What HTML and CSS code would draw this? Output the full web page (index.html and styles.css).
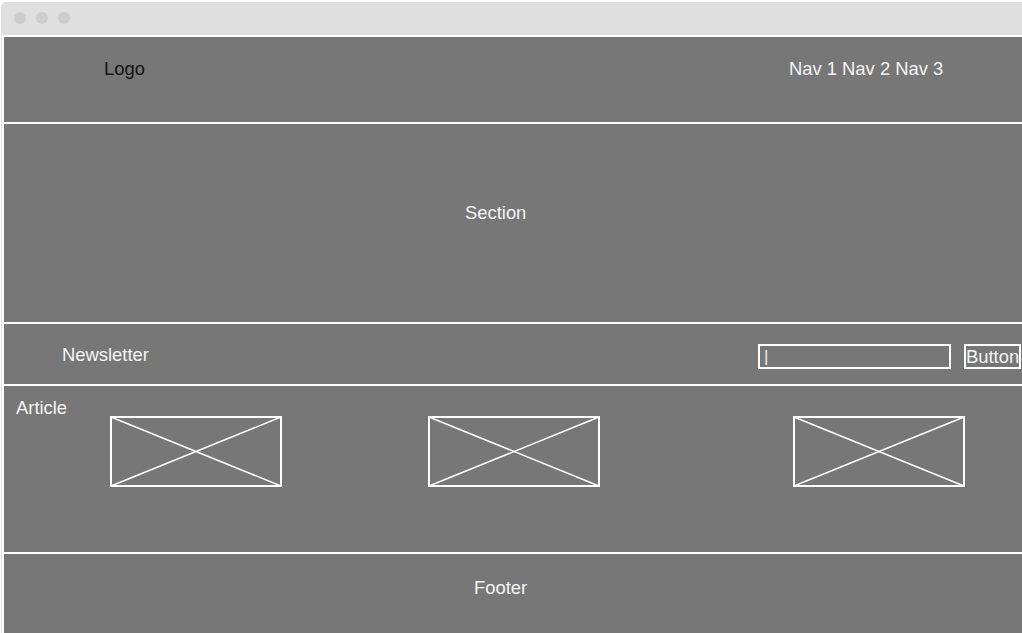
FILE: index.html
```html
<!DOCTYPE html>
<html lang="en">
<head>
    <meta charset="UTF-8">
    <meta name="viewport" content="width=device-width, initial-scale=1.0">
    <title>Wireframe</title>
    <link rel="stylesheet" href="styles.css">
</head>
<body>
    <div class="window">
        <div class="titlebar">
            <span class="dot"></span>
            <span class="dot"></span>
            <span class="dot"></span>
        </div>
        <div class="page">
            <header class="header">
                <div class="logo">Logo</div>
                <nav class="nav">Nav 1 Nav 2 Nav 3</nav>
            </header>
            <section class="section">Section</section>
            <div class="newsletter">
                <div class="newsletter-label">Newsletter</div>
                <div class="field">|</div>
                <button class="btn">Button</button>
            </div>
            <article class="article">
                <div class="article-label">Article</div>
                <svg class="thumb" width="172" height="71" viewBox="0 0 172 71">
                    <rect x="1" y="1" width="170" height="69" fill="none" stroke="#fff" stroke-width="2"/>
                    <line x1="1" y1="1" x2="171" y2="70" stroke="#fff" stroke-width="1.5"/>
                    <line x1="171" y1="1" x2="1" y2="70" stroke="#fff" stroke-width="1.5"/>
                </svg>
                <svg class="thumb" width="172" height="71" viewBox="0 0 172 71">
                    <rect x="1" y="1" width="170" height="69" fill="none" stroke="#fff" stroke-width="2"/>
                    <line x1="1" y1="1" x2="171" y2="70" stroke="#fff" stroke-width="1.5"/>
                    <line x1="171" y1="1" x2="1" y2="70" stroke="#fff" stroke-width="1.5"/>
                </svg>
                <svg class="thumb" width="172" height="71" viewBox="0 0 172 71">
                    <rect x="1" y="1" width="170" height="69" fill="none" stroke="#fff" stroke-width="2"/>
                    <line x1="1" y1="1" x2="171" y2="70" stroke="#fff" stroke-width="1.5"/>
                    <line x1="171" y1="1" x2="1" y2="70" stroke="#fff" stroke-width="1.5"/>
                </svg>
            </article>
            <footer class="footer">Footer</footer>
        </div>
    </div>
</body>
</html>
```

FILE: styles.css
```css
body {
    margin: 0;
    background-color: #fff;
    font-family: "Liberation Sans", Arial, sans-serif;
    font-size: 18.4px;
    overflow: hidden;
}
.window {
    margin: 2px 0 0 1px;
    padding-left: 1px;
    background-color: #dfdfdf;
    border-radius: 5px 0 0 0;
}
.titlebar {
    height: 33px;
    box-sizing: border-box;
    display: flex;
    gap: 10px;
    padding: 10px 0 0 12px;
}
.dot {
    width: 12px;
    height: 12px;
    border-radius: 50%;
    background-color: #cdcdcd;
}
.page {
    background-color: #fff;
    padding: 2px 0 0 2px;
    display: flex;
    flex-direction: column;
    gap: 2px;
}
.header,
.section,
.newsletter,
.article,
.footer {
    background-color: #777;
    color: #f4f4f4;
}
.header {
    height: 85px;
    box-sizing: border-box;
    padding: 21px 0 0 100px;
    display: flex;
    align-items: flex-start;
    gap: 644px;
}
.logo {
    color: #141414;
}
.section {
    height: 198px;
    box-sizing: border-box;
    padding: 78px 0 0 461px;
}
.newsletter {
    height: 60px;
    box-sizing: border-box;
    padding: 20px 0 0 58px;
    display: flex;
    align-items: flex-start;
}
.newsletter-label {
    width: 696px;
}
.field {
    width: 193px;
    height: 25px;
    box-sizing: border-box;
    border: 2px solid #fff;
    padding-left: 4px;
    line-height: 22px;
    font-size: 17px;
    color: #eee;
}
.btn {
    margin-left: 13px;
    width: 57px;
    height: 25px;
    padding: 0;
    border: 2px solid #fff;
    background: none;
    color: #f4f4f4;
    font-family: inherit;
    font-size: 18.4px;
    line-height: 20px;
}
.article {
    height: 166px;
    box-sizing: border-box;
    padding-left: 12px;
    display: grid;
    grid-template-columns: 94px 318px 365px 172px;
    align-items: start;
}
.article-label {
    margin-top: 11px;
}
.thumb {
    display: block;
    margin-top: 30px;
}
.footer {
    height: 90px;
    box-sizing: border-box;
    padding: 23px 0 0 470px;
}
```
